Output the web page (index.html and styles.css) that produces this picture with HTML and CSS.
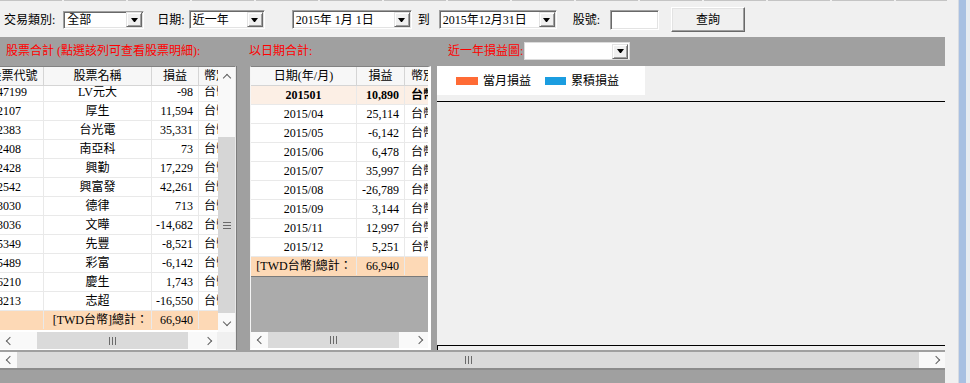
FILE: index.html
```html
<!DOCTYPE html>
<html lang="zh-Hant">
<head>
    <meta charset="UTF-8">
    <title>損益查詢</title>
    <link rel="stylesheet" href="styles.css">
</head>
<body>
<div class="screen">
    <div class="main">
        <div class="tabline"></div>

        <div class="toolbar">
            <span class="lbl">交易類別:</span>
            <div class="combo type"><span class="val">全部</span><span class="drop"></span></div>
            <span class="lbl date-lbl">日期:</span>
            <div class="combo range"><span class="val">近一年</span><span class="drop"></span></div>
            <div class="combo date from"><span class="val">2015年 1月 1日</span><span class="drop"></span></div>
            <span class="lbl to">到</span>
            <div class="combo date until"><span class="val">2015年12月31日</span><span class="drop"></span></div>
            <span class="lbl code-lbl">股號:</span>
            <input class="code" type="text">
            <button class="query" type="button">查詢</button>
        </div>

        <div class="band">
            <div class="sec1">股票合計 (點選該列可查看股票明細):</div>
            <div class="sec2">以日期合計:</div>
            <div class="sec3">近一年損益圖:<div class="combo pick"><span class="val"></span><span class="drop"></span></div></div>
        </div>

        <div class="panes">
            <!-- stock totals -->
            <div class="grid-left">
                <div class="gl-top">
                    <div class="gl-table">
                        <div class="head row4">
                            <span>股票代號</span><span>股票名稱</span><span>損益</span><span>幣別</span>
                        </div>
                        <div class="gl-body">
                            <div class="gl-rows">
                                <div class="row row4"><span class="c-code">47199</span><span class="c-name">LV元大</span><span class="c-num">-98</span><span class="c-cur">台幣</span></div>
                                <div class="row row4"><span class="c-code">2107</span><span class="c-name">厚生</span><span class="c-num">11,594</span><span class="c-cur">台幣</span></div>
                                <div class="row row4"><span class="c-code">2383</span><span class="c-name">台光電</span><span class="c-num">35,331</span><span class="c-cur">台幣</span></div>
                                <div class="row row4"><span class="c-code">2408</span><span class="c-name">南亞科</span><span class="c-num">73</span><span class="c-cur">台幣</span></div>
                                <div class="row row4"><span class="c-code">2428</span><span class="c-name">興勤</span><span class="c-num">17,229</span><span class="c-cur">台幣</span></div>
                                <div class="row row4"><span class="c-code">2542</span><span class="c-name">興富發</span><span class="c-num">42,261</span><span class="c-cur">台幣</span></div>
                                <div class="row row4"><span class="c-code">3030</span><span class="c-name">德律</span><span class="c-num">713</span><span class="c-cur">台幣</span></div>
                                <div class="row row4"><span class="c-code">3036</span><span class="c-name">文曄</span><span class="c-num">-14,682</span><span class="c-cur">台幣</span></div>
                                <div class="row row4"><span class="c-code">5349</span><span class="c-name">先豐</span><span class="c-num">-8,521</span><span class="c-cur">台幣</span></div>
                                <div class="row row4"><span class="c-code">5489</span><span class="c-name">彩富</span><span class="c-num">-6,142</span><span class="c-cur">台幣</span></div>
                                <div class="row row4"><span class="c-code">6210</span><span class="c-name">慶生</span><span class="c-num">1,743</span><span class="c-cur">台幣</span></div>
                                <div class="row row4"><span class="c-code">8213</span><span class="c-name">志超</span><span class="c-num">-16,550</span><span class="c-cur">台幣</span></div>
                                <div class="row row4 total"><span class="c-code"></span><span class="c-sum">[TWD台幣]總計：</span><span class="c-num">66,940</span><span class="c-cur"></span></div>
                            </div>
                        </div>
                    </div>
                    <div class="vscroll">
                        <div class="sbtn"><i class="chev up"></i></div>
                        <div class="vtrack"></div>
                        <div class="vthumb"><i class="grip-v"></i></div>
                        <div class="sbtn"><i class="chev down"></i></div>
                    </div>
                </div>
                <div class="gl-bottom">
                    <div class="hscroll left-h">
                        <div class="sbtn"><i class="chev left"></i></div>
                        <div class="htrack t1"></div>
                        <div class="hthumb"><i class="grip-h"></i></div>
                        <div class="htrack t2"></div>
                        <div class="sbtn"><i class="chev right"></i></div>
                    </div>
                    <div class="corner"></div>
                </div>
            </div>

            <!-- monthly totals -->
            <div class="grid-mid">
                <div class="gm-view">
                    <div class="head row3">
                        <span>日期(年/月)</span><span>損益</span><span>幣別</span>
                    </div>
                    <div class="gm-body">
                        <div class="gm-rows">
                            <div class="row row3 first"><span>201501</span><span class="c-num">10,890</span><span class="c-cur">台幣</span></div>
                            <div class="row row3"><span>2015/04</span><span class="c-num">25,114</span><span class="c-cur">台幣</span></div>
                            <div class="row row3"><span>2015/05</span><span class="c-num">-6,142</span><span class="c-cur">台幣</span></div>
                            <div class="row row3"><span>2015/06</span><span class="c-num">6,478</span><span class="c-cur">台幣</span></div>
                            <div class="row row3"><span>2015/07</span><span class="c-num">35,997</span><span class="c-cur">台幣</span></div>
                            <div class="row row3"><span>2015/08</span><span class="c-num">-26,789</span><span class="c-cur">台幣</span></div>
                            <div class="row row3"><span>2015/09</span><span class="c-num">3,144</span><span class="c-cur">台幣</span></div>
                            <div class="row row3"><span>2015/11</span><span class="c-num">12,997</span><span class="c-cur">台幣</span></div>
                            <div class="row row3"><span>2015/12</span><span class="c-num">5,251</span><span class="c-cur">台幣</span></div>
                            <div class="row row3 total"><span class="c-label">[TWD台幣]總計：</span><span class="c-num">66,940</span><span></span></div>
                        </div>
                    </div>
                    <div class="hscroll mid-h">
                        <div class="sbtn"><i class="chev left"></i></div>
                        <div class="hthumb"><i class="grip-h"></i></div>
                        <div class="htrack grow"></div>
                        <div class="sbtn"><i class="chev right"></i></div>
                    </div>
                </div>
            </div>

            <!-- chart -->
            <div class="chart">
                <div class="legend">
                    <span class="swatch month"></span><span class="leg-text">當月損益</span>
                    <span class="swatch sum"></span><span class="leg-text">累積損益</span>
                </div>
                <div class="axis top"></div>
                <div class="plot"></div>
                <div class="axis"></div>
                <div class="chart-foot"></div>
            </div>
        </div>

        <div class="hscroll outer-h">
            <div class="sbtn"><i class="chev left"></i></div>
            <div class="hthumb wide"><i class="grip-h"></i></div>
            <div class="htrack grow"></div>
            <div class="sbtn"><i class="chev right"></i></div>
        </div>
        <div class="footer"></div>
    </div>
    <div class="edge"></div>
</div>
</body>
</html>
```

FILE: styles.css
```css
body {
    margin: 0;
    background-color: #f0f0f0;
    font-family: "Liberation Serif", "Noto Sans CJK TC", serif;
    font-size: 12px;
    color: #000;
    overflow: hidden;
}
.screen {
    display: flex;
    width: 970px;
    height: 383px;
}
.main {
    width: 958px;
    display: flex;
    flex-direction: column;
}
.edge {
    width: 12px;
    background: linear-gradient(to right, #d6dbe2 0 1px, #a8c0e2 1px 8px, #e8ecf1 8px);
}

/* faint header edges left over at the very top */
.tabline {
    height: 2px;
    width: 947px;
    background: repeating-linear-gradient(to right, #c4c4c4 0 62px, transparent 62px 64px) no-repeat;
    background-size: 100% 1px;
}

/* toolbar */
.toolbar {
    height: 35px;
    display: flex;
    align-items: center;
    padding-left: 4px;
}
.lbl {
    white-space: nowrap;
    line-height: 14px;
}
.combo {
    box-sizing: border-box;
    height: 19px;
    display: flex;
    align-items: center;
    padding: 0 1px 0 3px;
    background-color: #fff;
    border: 1px solid;
    border-color: #a0a0a0 #fff #fff #a0a0a0;
    box-shadow: inset 1px 1px 0 #696969, inset -1px -1px 0 #e3e3e3;
}
.combo .val {
    flex: 1;
    white-space: nowrap;
    line-height: 14px;
}
.drop {
    box-sizing: border-box;
    width: 16px;
    height: 15px;
    display: flex;
    align-items: center;
    justify-content: center;
    background-color: #f0f0f0;
    border: 1px solid;
    border-color: #e3e3e3 #696969 #696969 #e3e3e3;
    box-shadow: inset 1px 1px 0 #fff, inset -1px -1px 0 #a0a0a0;
}
.drop::after {
    content: "";
    width: 1px;
    border-top: 4px solid #000;
    border-left: 3px solid transparent;
    border-right: 3px solid transparent;
}
.type { margin-left: 8px; width: 81px; height: 18px; }
.date-lbl { margin-left: 13px; }
.range { margin-left: 4px; width: 76px; }
.from { margin-left: 27px; width: 120px; }
.to { margin-left: 6px; }
.until { margin-left: 9px; width: 118px; }
.code-lbl { margin-left: 16px; }
.code {
    box-sizing: border-box;
    margin-left: 10px;
    width: 49px;
    height: 20px;
    padding: 0;
    background-color: #fff;
    border: 1px solid;
    border-color: #a0a0a0 #fff #fff #a0a0a0;
    box-shadow: inset 1px 1px 0 #696969, inset -1px -1px 0 #e3e3e3;
}
.query {
    box-sizing: border-box;
    margin-left: 12px;
    width: 74px;
    height: 25px;
    padding: 0 0 2px;
    font: inherit;
    background-color: #f0f0f0;
    border: 1px solid;
    border-color: #fff #696969 #696969 #fff;
    box-shadow: inset -1px -1px 0 #a0a0a0, inset 1px 1px 0 #e3e3e3;
}

/* red titles */
.band {
    box-sizing: border-box;
    height: 28px;
    width: 945px;
    display: flex;
    align-items: center;
    background-color: #a0a0a0;
    color: #f00;
    line-height: 14px;
    white-space: nowrap;
}
.band > div {
    box-sizing: border-box;
    padding-left: 6px;
}
.sec1 { width: 243px; }
.sec2 { width: 199px; }
.sec3 {
    display: flex;
    align-items: center;
}
.pick {
    width: 106px;
    height: 18px;
    margin-left: 1px;
    border-color: #dcdcdc;
    box-shadow: none;
}

/* panes */
.panes {
    display: flex;
    align-items: flex-start;
    width: 945px;
    height: 287px;
    box-sizing: border-box;
    padding-top: 1px;
    background-color: #a0a0a0;
}
.grid-left {
    width: 235px;
    border-top: 1px solid #828282;
    border-right: 1px solid #e8e8e8;
    border-bottom: 1px solid #fff;
    box-shadow: 1px 0 0 #7d7d7d;
    background-color: #fff;
}
.gl-top {
    display: flex;
    height: 265px;
}
.gl-table {
    width: 218px;
    overflow: hidden;
}
.row4 {
    display: grid;
    grid-template-columns: 60px 108px 47px 50px;
    width: 265px;
    margin-left: -16px;
}
.row3 {
    display: grid;
    grid-template-columns: 106px 48px 40px;
    width: 194px;
}
.head {
    box-sizing: border-box;
    height: 19px;
    background-color: #f7f7f7;
    border-bottom: 1px solid #d5d5d5;
}
.head span {
    border-right: 1px solid #d5d5d5;
    line-height: 18px;
    text-align: center;
    white-space: nowrap;
}
.row4.head span:last-child {
    text-align: left;
    padding-left: 5px;
}
.row3.head span:last-child {
    text-align: left;
    padding-left: 6px;
}
.row {
    box-sizing: border-box;
    height: 19px;
    background-color: #fff;
    border-bottom: 1px solid #e9e9e9;
}
.row span {
    border-right: 1px solid #e9e9e9;
    line-height: 18px;
    white-space: nowrap;
    overflow: hidden;
}
.row3 span:first-child { text-align: center; }
.c-code { padding-left: 13px; }
.c-name { text-align: center; }
.c-sum { text-align: right; padding-right: 3px; }
.c-num { text-align: right; padding-right: 5px; }
.c-cur { padding-left: 5px; }
.row3 .c-cur { padding-left: 6px; }
.row3 .c-label { text-align: left; padding-left: 1px; }
.total { background-color: #fdd9b6; border-bottom-color: #fdd9b6; }
.row.first { background-color: #fcefe5; font-weight: bold; }
.gl-body {
    height: 246px;
    overflow: hidden;
}
.gl-rows { margin-top: -3px; }

/* scrollbars */
.vscroll {
    width: 17px;
    display: flex;
    flex-direction: column;
    background-color: #f9f9f9;
}
.sbtn {
    flex: none;
    width: 17px;
    height: 19px;
    display: flex;
    align-items: center;
    justify-content: center;
    background-color: #f9f9f9;
}
.vtrack { height: 51px; }
.vthumb {
    height: 176px;
    display: flex;
    align-items: center;
    justify-content: center;
    background-color: #d6d6d6;
}
.hscroll {
    display: flex;
    background-color: #f9f9f9;
}
.hscroll .sbtn { height: 100%; }
.hthumb {
    display: flex;
    align-items: center;
    justify-content: center;
    background-color: #dadada;
}
.grow { flex: 1; }
.left-h { width: 217px; height: 17px; }
.left-h .t1 { width: 20px; }
.left-h .t2 { width: 12px; }
.left-h .hthumb { width: 151px; }
.corner {
    width: 18px;
    background-color: #f0f0f0;
}
.gl-bottom {
    display: flex;
    height: 17px;
}
.chev {
    width: 5px;
    height: 5px;
    border-left: 1px solid #606060;
    border-bottom: 1px solid #606060;
}
.chev.left { transform: translateX(1px) rotate(45deg); }
.chev.right { transform: translateX(-1px) rotate(-135deg); }
.chev.up { transform: translateY(1px) rotate(135deg); }
.chev.down { transform: translateY(-1px) rotate(-45deg); }
.grip-h {
    width: 7px;
    height: 8px;
    background: repeating-linear-gradient(to right, #6a6a6a 0 1px, transparent 1px 3px);
}
.grip-v {
    width: 8px;
    height: 7px;
    background: repeating-linear-gradient(to bottom, #6a6a6a 0 1px, transparent 1px 3px);
}

/* middle grid */
.grid-mid {
    margin-left: 14px;
    border-top: 1px solid #828282;
    border-left: 1px solid #f4f4f4;
    border-right: 3px solid #fff;
    border-bottom: 2px solid #fff;
}
.gm-view {
    width: 177px;
    overflow: hidden;
}
.gm-body {
    height: 246px;
    background-color: #ababab;
}
.gm-rows { border-bottom: 1px solid #7a7a7a; }
.mid-h { height: 16px; }
.mid-h .hthumb { width: 131px; }

/* chart */
.chart {
    box-sizing: border-box;
    margin-left: 6px;
    width: 508px;
    height: 284px;
    display: flex;
    flex-direction: column;
    background-color: #f0f0f0;
}
.legend {
    width: 208px;
    height: 29px;
    display: flex;
    align-items: center;
    padding-left: 19px;
    box-sizing: border-box;
    background-color: #fff;
}
.swatch {
    width: 22px;
    height: 8px;
}
.swatch.month { background-color: #ff6b35; }
.swatch.sum { background-color: #1b9de0; margin-left: 14px; width: 21px; }
.leg-text {
    margin-left: 5px;
    line-height: 14px;
}
.axis {
    height: 1px;
    background-color: #000;
}
.axis.top { margin-top: 6px; }
.plot { flex: 1; }
.chart-foot {
    height: 4px;
    border-left: 1px solid #000;
}

/* bottom */
.outer-h {
    width: 945px;
    height: 16px;
    margin-top: 0;
}
.outer-h .hthumb { width: 902px; }
.footer {
    box-sizing: border-box;
    width: 945px;
    height: 15px;
    background-color: #a0a0a0;
    border-top: 2px solid #8c8c8c;
}
```
